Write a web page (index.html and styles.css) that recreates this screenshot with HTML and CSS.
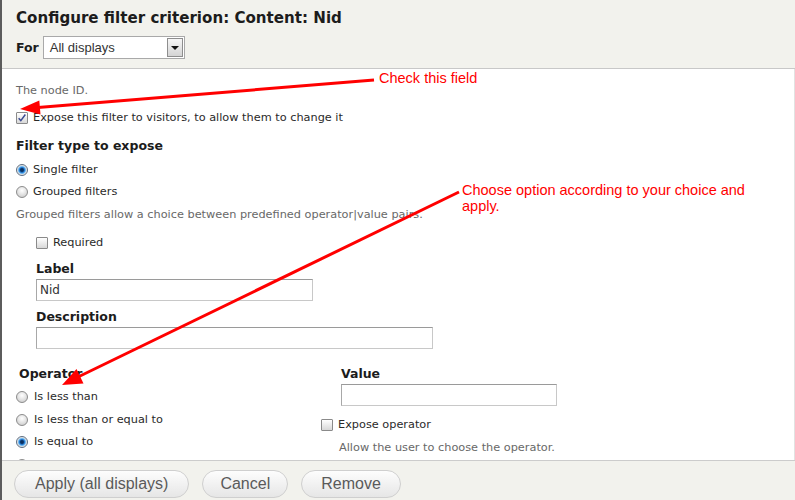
FILE: index.html
```html
<!DOCTYPE html>
<html>
<head>
<meta charset="utf-8">
<title>Configure filter criterion</title>
<link rel="stylesheet" href="styles.css">
</head>
<body>
<div class="dialog">
  <header class="head">
    <h1 class="title">Configure filter criterion: Content: Nid</h1>
    <div class="for-row">
      <span class="bold">For</span>
      <div class="select"><span class="select-text">All displays</span><span class="select-btn"><span class="tri"></span></span></div>
    </div>
  </header>

  <main class="body">
    <div class="desc">The node ID.</div>
    <div class="opt mt9"><span class="cb checked"><svg viewBox="0 0 12 12" width="10" height="10"><path d="M2 6.2 L4.6 9.2 L10 1.8" fill="none" stroke="#3a4a92" stroke-width="1.8"/></svg></span><span>Expose this filter to visitors, to allow them to change it</span></div>
    <div class="bold mt10">Filter type to expose</div>
    <div class="opt mt6"><span class="rd on"></span><span>Single filter</span></div>
    <div class="opt mt4"><span class="rd"></span><span>Grouped filters</span></div>
    <div class="desc mt5">Grouped filters allow a choice between predefined operator|value pairs.</div>

    <div class="indent">
      <div class="opt mt10"><span class="cb"></span><span>Required</span></div>
      <div class="bold mt8">Label</div>
      <div class="input w277 mt1">Nid</div>
      <div class="bold mt7">Description</div>
      <div class="input w397 mt1"></div>
    </div>

    <div class="cols">
      <div class="col-left">
        <div class="bold pl3">Operator</div>
        <div class="opt op mt5"><span class="rd"></span><span>Is less than</span></div>
        <div class="opt op mt5"><span class="rd"></span><span>Is less than or equal to</span></div>
        <div class="opt op mt4"><span class="rd on"></span><span>Is equal to</span></div>
        <div class="opt op mt5"><span class="rd"></span></div>
      </div>
      <div class="col-right">
        <div class="bold pl20">Value</div>
        <div class="input w216 ml20 mt1"></div>
        <div class="opt mt10"><span class="cb"></span><span>Expose operator</span></div>
        <div class="desc mt5 pl18">Allow the user to choose the operator.</div>
      </div>
    </div>
  </main>

  <footer class="foot">
    <button class="btn btn-wide">Apply (all displays)</button>
    <button class="btn btn-narrow">Cancel</button>
    <button class="btn">Remove</button>
  </footer>

  <div class="overlay">
    <svg class="arrows" width="795" height="500" viewBox="0 0 795 500">
      <line x1="374" y1="80" x2="38" y2="107.5" stroke="#f00" stroke-width="3"/>
      <polygon points="20,109 40.5,114.4 39.3,100.4" fill="#f00"/>
      <line x1="459" y1="192" x2="78" y2="377" stroke="#f00" stroke-width="3"/>
      <polygon points="62,385 83.5,383.4 76.5,369" fill="#f00"/>
    </svg>
    <div class="note note1">Check this field</div>
    <div class="note note2">Choose option according to your choice and<br>apply.</div>
  </div>
</div>
</body>
</html>
```

FILE: styles.css
```css
* { box-sizing: border-box; }

html, body {
  margin: 0;
  padding: 0;
  background: #fff;
}

body {
  font-family: "DejaVu Sans", Verdana, sans-serif;
  font-size: 11.3px;
  color: #2a2a2a;
}

.dialog {
  position: relative;
  width: 795px;
  height: 500px;
  border-left: 2px solid #5c5c5c;
  display: flex;
  flex-direction: column;
  overflow: hidden;
}

.head {
  background: #f2f2ed;
  border-bottom: 1px solid #c8c8c8;
  padding: 8px 14px 9px;
  flex: none;
}

.title {
  margin: 0;
  font-size: 15.1px;
  line-height: 20px;
  font-weight: bold;
  color: #1c1c1c;
}

.for-row {
  margin-top: 8px;
  display: flex;
  align-items: center;
  gap: 4px;
}

.bold {
  font-weight: bold;
  font-size: 12.5px;
  line-height: 18px;
  color: #1c1c1c;
}

.select {
  width: 142px;
  height: 23px;
  border: 1px solid #a9a9a9;
  background: #fff;
  display: flex;
  align-items: center;
  justify-content: space-between;
  padding: 0 1px 0 6px;
}

.select-text {
  font-family: "Liberation Sans", Arial, sans-serif;
  font-size: 13px;
  color: #333;
}

.select-btn {
  width: 16px;
  height: 19px;
  border: 1px solid #8e8e8e;
  background: linear-gradient(#f6f6f6, #d4d4d4);
  display: flex;
  align-items: center;
  justify-content: center;
}

.tri {
  width: 0;
  height: 0;
  border-left: 4px solid transparent;
  border-right: 4px solid transparent;
  border-top: 4px solid #111;
}

.body {
  flex: 1;
  overflow: hidden;
  padding: 13px 14px 0;
  border-right: 1px solid #e2e2e2;
}

.desc {
  line-height: 18px;
  color: #686868;
}

.opt {
  display: flex;
  align-items: center;
  gap: 5px;
  height: 18px;
  line-height: 18px;
}

.op { gap: 6px; }

.cb {
  width: 12px;
  height: 12px;
  flex: none;
  border: 1px solid #8a8a8a;
  border-radius: 1px;
  background: linear-gradient(#ffffff, #d8d8d8);
  display: flex;
  align-items: center;
  justify-content: center;
}

.rd {
  width: 12px;
  height: 12px;
  flex: none;
  border-radius: 50%;
  border: 1px solid #8c8c8c;
  background: radial-gradient(circle at 50% 35%, #ffffff 0, #e6e6e6 45%, #c4c4c4 100%);
}

.rd.on {
  border-color: #5d6d80;
  background: radial-gradient(circle at 50% 50%, #07264d 0, #0c3b74 1.6px, #2f8ae0 2.8px, #8cc9f5 3.8px, #d8dde2 4.4px, #f2f2f2 5px);
}

.indent { padding-left: 20px; }

.input {
  height: 22px;
  border: 1px solid #c8c8c8;
  border-top-color: #9a9a9a;
  border-left-color: #a8a8a8;
  background: #fff;
  padding: 0 3px;
  line-height: 20px;
  font-size: 12px;
  color: #333;
}

.w277 { width: 277px; }
.w397 { width: 397px; }
.w216 { width: 216px; }

.cols {
  margin-top: 16px;
  display: grid;
  grid-template-columns: 305px 260px;
}

.pl3 { padding-left: 3px; }
.pl18 { padding-left: 18px; }
.pl20 { padding-left: 20px; }
.ml20 { margin-left: 20px; }

.mt1 { margin-top: 1px; }
.mt4 { margin-top: 4px; }
.mt5 { margin-top: 5px; }
.mt6 { margin-top: 6px; }
.mt7 { margin-top: 7px; }
.mt8 { margin-top: 8px; }
.mt9 { margin-top: 9px; }
.mt10 { margin-top: 10px; }

.foot {
  flex: none;
  height: 40px;
  background: #f2f2ed;
  border-top: 1px solid #cccccc;
  padding: 9px 12px 0;
  display: flex;
  align-items: flex-start;
  gap: 13px;
}

.btn {
  height: 28px;
  padding: 0 19px;
  border: 1px solid #cfcfcf;
  border-radius: 14px;
  background: linear-gradient(#fdfdfd, #e6e6e6);
  font-family: "Liberation Sans", Arial, sans-serif;
  font-size: 16px;
  color: #5a5a5a;
  line-height: 26px;
}

.btn-wide { padding: 0 20px; }
.btn-narrow { padding: 0 17px; }

.overlay {
  position: absolute;
  top: 0;
  left: -2px;
  width: 795px;
  height: 500px;
  pointer-events: none;
}

.arrows {
  position: absolute;
  top: 0;
  left: 0;
}

.note {
  position: absolute;
  font-family: "Liberation Sans", Arial, sans-serif;
  font-size: 14.5px;
  line-height: 16px;
  color: #f00;
}

.note1 { left: 379px; top: 70px; }
.note2 { left: 462px; top: 182px; }
```
